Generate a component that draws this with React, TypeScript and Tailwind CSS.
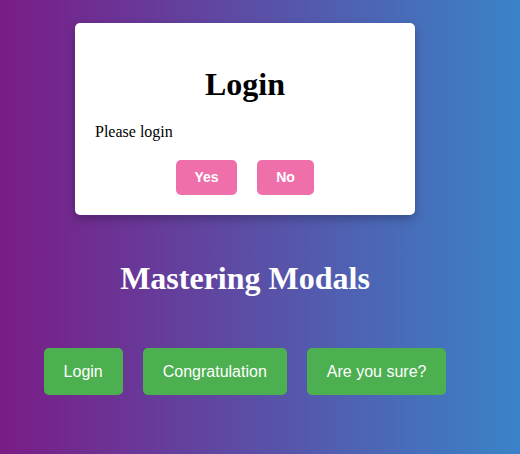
import React from "react";

const actions = ["Login", "Congratulation", "Are you sure?"];

const LoginModal = () => {
  return (
    <div className="absolute left-[75px] top-[23px] w-[340px] h-[192px] bg-white rounded-[5px] shadow-[0_4px_10px_rgba(0,0,0,0.25)] pt-[43px] px-5 pb-5 flex flex-col">
      <h2 className="text-[32px] leading-[36px] font-bold text-center text-black">Login</h2>
      <p className="mt-[21px] text-[16px] leading-[18px] text-black">Please login</p>
      <div className="mt-[19px] flex justify-center gap-5">
        <button className="w-[61px] h-[35px] rounded-[5px] bg-[#ef6fab] text-white text-[14px] font-semibold font-['Liberation_Sans',Arial,sans-serif]">
          Yes
        </button>
        <button className="w-[57px] h-[35px] rounded-[5px] bg-[#ef6fab] text-white text-[14px] font-semibold font-['Liberation_Sans',Arial,sans-serif]">
          No
        </button>
      </div>
    </div>
  );
};

export default function App() {
  return (
    <div className="relative min-h-[454px] w-full bg-[linear-gradient(to_right,#7a1c86,#3a83c8)] font-['Liberation_Serif','Times_New_Roman',serif] overflow-hidden">
      <div className="w-[490px] flex flex-col items-center pt-[260px]">
        <h1 className="text-[32px] leading-[37px] font-bold text-white">Mastering Modals</h1>
        <div className="mt-[51px] flex gap-5">
          {actions.map((label) => (
            <button
              key={label}
              className="h-[47px] px-5 rounded-[5px] bg-[#4caf50] text-white text-[16px] font-['Liberation_Sans',Arial,sans-serif]"
            >
              {label}
            </button>
          ))}
        </div>
      </div>
      <LoginModal />
    </div>
  );
}
